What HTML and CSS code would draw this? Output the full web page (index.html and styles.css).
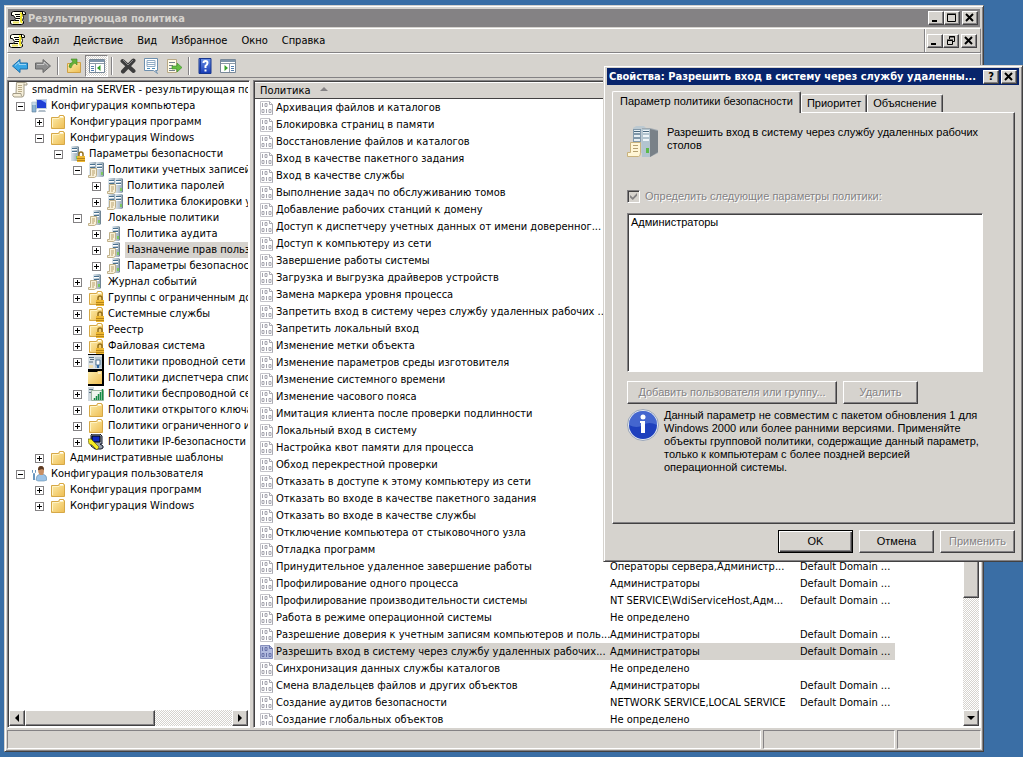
FILE: index.html
```html
<!DOCTYPE html>
<html lang="ru">
<head>
    <meta charset="UTF-8">
    <meta name="viewport" content="width=device-width, initial-scale=1.0">
    <title>Результирующая политика</title>
    <link rel="stylesheet" href="styles.css">
</head>
<body>

    <!-- Icons -->
    <svg class="defs" width="0" height="0">
        <linearGradient id="gFolder" x1="0" y1="0" x2="1" y2="1"><stop offset="0" stop-color="#fdeeae"/><stop offset="1" stop-color="#eebd52"/></linearGradient>
        <linearGradient id="gServer" x1="0" y1="0" x2="1" y2="0"><stop offset="0" stop-color="#dfe8ee"/><stop offset="1" stop-color="#8fa2b0"/></linearGradient>
        <linearGradient id="gBlue" x1="0" y1="0" x2="0" y2="1"><stop offset="0" stop-color="#6d93e8"/><stop offset="1" stop-color="#1539b4"/></linearGradient>
        <symbol id="gpo" viewBox="0 0 16 16">
            <path d="M3.500 1.500h10l2 1v2h-3l1 3-1 3 1 1v2l-2 1h-9l-2-1v-3h4l1-2-2-3H1.500v-3z" fill="#fffff0" stroke="#000"/>
            <path d="M10 3l2 1-1 3v4l1 2" stroke="#f0e424" stroke-width="2" fill="none"/>
            <path d="M3 12.500h6" stroke="#e8e060" stroke-width="2"/>
            <path d="M5 4.500h5M6 6.500h4M6 8.500h4M5 10.500h4M12.500 2v2.500" stroke="#000"/>
        </symbol>
        <symbol id="scroll" viewBox="0 0 16 16">
            <path d="M4.500 .5h9q2 0 1.500 2.500H12v9q0 3-2 3H2q-2-1-1-3.500h3z" fill="#f6efda" stroke="#a39c88"/>
            <path d="M12 3V1.500M9 11.500H1M9 11.500q0 3 1.500 3" stroke="#a39c88" fill="none"/>
            <path d="M6 3.500h4M6 5.500h4M6 7.500h4M6 9.500h4" stroke="#b9ab88"/>
        </symbol>
        <symbol id="folder" viewBox="0 0 16 16">
            <path d="M1.500 3.500h7l1-2h4l1 1.500v11.500h-13z" fill="url(#gFolder)" stroke="#d6a847"/>
            <path d="M10 2.500h3" stroke="#fff"/>
            <path d="M2.500 13V4.500H9l1-1h3.500" stroke="#fff3c5" fill="none"/>
        </symbol>
        <symbol id="lock" viewBox="0 0 16 16">
            <path d="M10 10.500V8q0-2 2-2t2 2v2.500" fill="none" stroke="#95701b" stroke-width="1.500"/>
            <path d="M8 10h8v6H8z" fill="#efb932"/>
            <path d="M8 12.500h8M8 14.500h8" stroke="#b88518"/>
        </symbol>
        <symbol id="folderlock" viewBox="0 0 16 16"><use href="#folder"/><use href="#lock"/></symbol>
        <symbol id="tower" viewBox="0 0 16 16">
            <path d="M0 1l1-1h6l1 1v13l-1 1H0z" fill="url(#gServer)"/>
            <path d="M7.500 1v13" stroke="#708494"/>
            <path d="M1 2.500h5M1 5.500h5" stroke="#48708f"/>
            <path d="M1 3.500h5M1 6.500h5" stroke="#fff"/>
            <path d="M5 10h2v3H5z" fill="#7cc860"/>
        </symbol>
        <symbol id="paper" viewBox="0 0 16 16">
            <path d="M2.500 6.500h6v7q-1 2-2 2H.5v-2h2z" fill="#f8f0d8" stroke="#c0b18a"/>
            <path d="M4 9h3M4 11h3M4 13h2" stroke="#b8a16c"/>
        </symbol>
        <symbol id="serverlock" viewBox="0 0 16 16"><use href="#tower" x="2"/><use href="#lock"/></symbol>
        <symbol id="servers" viewBox="0 0 16 16"><use href="#tower" x="1"/><use href="#tower" x="8"/><use href="#paper"/></symbol>
        <symbol id="server" viewBox="0 0 16 16"><use href="#tower" x="5"/><use href="#paper"/></symbol>
        <symbol id="wired" viewBox="0 0 16 16">
            <path d="M0 0h16v16H0z" fill="#000"/><path d="M0 1h14v14H0z" fill="#dce3e7"/>
            <path d="M1 3.500h5M2 5.500h4M1 8h4" stroke="#526b7d"/>
            <path d="M7 3h7v11H7z" fill="#b5c5cf"/><path d="M8 6h4v5H8z" fill="#fff" stroke="#587a98"/>
            <path d="M10 11v3" stroke="#2c68a6" stroke-width="2"/><path d="M1 11h4v3H1z" fill="#f0ddaa"/>
        </symbol>
        <symbol id="folderdark" viewBox="0 0 16 16"><path d="M0 0h16v16H0z" fill="#000"/><path d="M0 2h9l1-1h4v13H0z" fill="url(#gFolder)"/><path d="M10 3h3" stroke="#fff"/></symbol>
        <symbol id="wireless" viewBox="0 0 16 16">
            <path d="M0 1h6v14H0z" fill="#cfd8de"/><path d="M1 3.500h4M1 6.500h4" stroke="#526b7d"/>
            <path d="M3.500 4.500h12v10h-12z" fill="#eff6ee" stroke="#9bb69e"/>
            <path d="M6.500 14v-2M8.500 14v-4M10.500 14V8M12.500 14V6M14.500 14V3" stroke="#168a46" stroke-width="1.500"/>
        </symbol>
        <symbol id="ipsec" viewBox="0 0 16 16">
            <path d="M3 1l1-1h8l2 2v8h-2l3 2v2l-2 1H7l-4-3z" fill="#98a0ac" stroke="#151a2c"/>
            <path d="M4 2h8v6H4z" fill="#1029c0" stroke="#000"/>
            <path d="M0 5l3 0 3 3 5 5-2 3-5-5-3-1z" fill="#f5ea26" stroke="#575000" stroke-width=".6"/>
        </symbol>
        <symbol id="computer" viewBox="0 0 16 16">
            <path d="M5.500 1.500h10v9h-10z" fill="#1e3ed5" stroke="#c4d0dc"/>
            <path d="M10 2h5v3z" fill="#8fb1ff"/>
            <path d="M8 12h6l1 2H7z" fill="#b2bfca"/>
            <path d="M1 4h4v10H1z" fill="#8eb5d3" stroke="#587994" stroke-width=".6"/>
            <path d="M2 3v4M4 3v4" stroke="#fff"/>
        </symbol>
        <symbol id="user" viewBox="0 0 16 16">
            <path d="M5 14q0-5 4-6h3q4 1 4 6l-3 1H7z" fill="#9cc3e7" stroke="#628dae" stroke-width=".6"/>
            <path d="M7 4q0-4 3-4t3 4-1 5h-3Q7 7 7 4z" fill="#c78e63"/>
            <path d="M7 4q0-4 3-4t3 4l-2-1-3 1z" fill="#5b3b25"/>
            <path d="M1.500 4v2.500l1 1V14M4.500 4v2.500l-1 1V14" stroke="#6a97c0" fill="none"/>
        </symbol>
        <symbol id="policy" viewBox="0 0 14 14">
            <path d="M.5.500h9l3 3v10H.5z" fill="#fff" stroke="#c4c4ca"/>
            <path d="M9.500.5v3h3v10" fill="none" stroke="#a8a8b0"/>
            <path d="M2.500 2v4M5 2.500h2v3H5zM2 8.500h2v3H2zM6.500 8v4M9 8.500h2v3H9z" fill="none" stroke="#a4a4ae"/>
        </symbol>
        <symbol id="policysel" viewBox="0 0 14 14">
            <path d="M.5.500h9l3 3v10H.5z" fill="#b2bbdf" stroke="#8790bd"/>
            <path d="M9.500.5v3h3M2.500 2v4M5 2.500h2v3H5zM2 8.500h2v3H2zM6.500 8v4M9 8.500h2v3H9z" fill="none" stroke="#6872a8"/>
        </symbol>
        <symbol id="arrow" viewBox="0 0 16 16"><path d="M.5 8L8 1.500v3.500h7.500v6H8v3.500z"/><path d="M3 7.500L7 4v2.500h7" fill="none" stroke="#fff" stroke-opacity=".5"/></symbol>
        <symbol id="arrowr" viewBox="0 0 16 16"><path d="M15.500 8L8 1.500v3.500H.5v6H8v3.500z"/><path d="M2 6.500h7V4l4 3.500" fill="none" stroke="#fff" stroke-opacity=".5"/></symbol>
        <symbol id="up" viewBox="0 0 16 16"><path d="M1.500 5.500h5l1-1h7v10h-13z" fill="url(#gFolder)" stroke="#cfa145"/><path d="M3 9q0-4 4-5L5 1h6v6L9 5Q6 6 5 10z" fill="#64b33b" stroke="#3f8620" stroke-width=".6"/></symbol>
        <symbol id="pane" viewBox="0 0 16 16">
            <path d="M.5 1.500h15v13H.5z" fill="#fff" stroke="#798999"/><path d="M1 2h14v2H1z" fill="#7d94aa"/>
            <path d="M1 5.500h14M6.500 6v8" stroke="#8c9aa8"/><path d="M2 8.500h3M2 10.500h3M2 12.500h3" stroke="#537fae"/>
            <path d="M11.500 7v6L8 10z" fill="#35a32b"/>
        </symbol>
        <symbol id="actions" viewBox="0 0 16 16">
            <path d="M.5 1.500h15v13H.5z" fill="#fff" stroke="#798999"/><path d="M1 2h14v2H1z" fill="#7d94aa"/>
            <path d="M1 5.500h14M9.500 6v8" stroke="#8c9aa8"/><path d="M11 8.500h3M11 10.500h3M11 12.500h3" stroke="#537fae"/>
            <path d="M4.500 7v6L8 10z" fill="#35a32b"/>
        </symbol>
        <symbol id="delete" viewBox="0 0 16 16"><path d="M2.500 3l11 10M13.500 2.500L3 13.500" stroke="#3d3d3d" stroke-width="4" stroke-linecap="round"/><path d="M3 2l5 5 5-5" stroke="#8b8b8b" fill="none"/></symbol>
        <symbol id="props" viewBox="0 0 16 16"><path d="M1.500.5h13v12h-2l2 3-4-3h-9z" fill="#fff" stroke="#6d8fae"/><path d="M4 2.500h8v6H4zM4 4.500h8M4 6.500h8" fill="none" stroke="#91acc5"/><path d="M4 10.500h3M9 10.500h3" stroke="#4e91bd"/></symbol>
        <symbol id="export" viewBox="0 0 16 16"><path d="M1.500 1.500h9v13h-9z" fill="#fffbe8" stroke="#b9a985"/><path d="M3 4.500h6M3 7.500h4M3 10.500h4M3 12.500h6" stroke="#74828c"/><path d="M6 8h5V5l5 4.500-5 4.500v-3H6z" fill="#67be43" stroke="#348d25" stroke-width=".6"/></symbol>
        <symbol id="help" viewBox="0 0 16 16"><path d="M2 .5h12v15H2z" fill="url(#gBlue)" stroke="#18378d"/><path d="M3.500 1v14" stroke="#16369c"/><path d="M6.500 5q0-2 2-2t2 2q0 1.500-2 3v2" fill="none" stroke="#fff" stroke-width="2"/><path d="M7.500 11.500h2v2h-2z" fill="#fff"/></symbol>
    </svg>

    <!-- Console window -->
    <main class="window">
        <header class="titlebar">
            <svg class="icon"><use href="#gpo"/></svg>
            <h1>Результирующая политика</h1>
            <div class="winbuttons">
                <button aria-label="Свернуть"><svg viewBox="0 0 10 10"><path d="M1 8h5" stroke-width="2"/></svg></button>
                <button aria-label="Развернуть"><svg viewBox="0 0 10 10"><path d="M.5 1.500h8v7h-8zM0 1h9"/></svg></button>
                <button class="close" aria-label="Закрыть"><svg viewBox="0 0 10 10"><path d="M1 1l7 7M8 1L1 8" stroke-width="2"/></svg></button>
            </div>
        </header>

        <div class="menubar">
            <svg class="icon"><use href="#gpo"/></svg>
            <nav>
                <button>Файл</button>
                <button>Действие</button>
                <button>Вид</button>
                <button>Избранное</button>
                <button>Окно</button>
                <button>Справка</button>
            </nav>
            <div class="winbuttons">
                <button aria-label="Свернуть окно"><svg viewBox="0 0 10 10"><path d="M1 8h5" stroke-width="2"/></svg></button>
                <button aria-label="Восстановить окно"><svg viewBox="0 0 10 10"><path d="M3.500 3V.5h5v5H6M3 1h6M1.500 4.500h5v4h-5zM1 4h6"/></svg></button>
                <button class="close" aria-label="Закрыть окно"><svg viewBox="0 0 10 10"><path d="M1 1l7 7M8 1L1 8" stroke-width="2"/></svg></button>
            </div>
        </div>

        <div class="toolbar">
            <button class="back" aria-label="Назад"><svg class="icon"><use href="#arrow"/></svg></button>
            <button class="forward" aria-label="Вперед"><svg class="icon"><use href="#arrowr"/></svg></button>
            <span class="sep"></span>
            <button aria-label="Вверх"><svg class="icon"><use href="#up"/></svg></button>
            <button class="pressed" aria-label="Дерево консоли"><svg class="icon"><use href="#pane"/></svg></button>
            <span class="sep"></span>
            <button aria-label="Удалить"><svg class="icon"><use href="#delete"/></svg></button>
            <button aria-label="Свойства"><svg class="icon"><use href="#props"/></svg></button>
            <button aria-label="Экспорт"><svg class="icon"><use href="#export"/></svg></button>
            <span class="sep"></span>
            <button aria-label="Справка"><svg class="icon"><use href="#help"/></svg></button>
            <button aria-label="Панель действий"><svg class="icon"><use href="#actions"/></svg></button>
        </div>

        <div class="content">
            <!-- Tree -->
            <section class="treepane">
                <div class="tree">
                    <div class="node root"><svg class="icon"><use href="#scroll"/></svg><span>smadmin на SERVER - результирующая пол</span></div>
                    <ul>
                        <li>
                            <div class="node"><button class="toggle open"></button><svg class="icon"><use href="#computer"/></svg><span>Конфигурация компьютера</span></div>
                            <ul>
                                <li><div class="node"><button class="toggle"></button><svg class="icon"><use href="#folder"/></svg><span>Конфигурация программ</span></div></li>
                                <li>
                                    <div class="node"><button class="toggle open"></button><svg class="icon"><use href="#folder"/></svg><span>Конфигурация Windows</span></div>
                                    <ul>
                                        <li>
                                            <div class="node"><button class="toggle open"></button><svg class="icon"><use href="#serverlock"/></svg><span>Параметры безопасности</span></div>
                                            <ul>
                                                <li>
                                                    <div class="node"><button class="toggle open"></button><svg class="icon"><use href="#servers"/></svg><span>Политики учетных записей</span></div>
                                                    <ul>
                                                        <li><div class="node"><button class="toggle"></button><svg class="icon"><use href="#servers"/></svg><span>Политика паролей</span></div></li>
                                                        <li><div class="node"><button class="toggle"></button><svg class="icon"><use href="#servers"/></svg><span>Политика блокировки у</span></div></li>
                                                    </ul>
                                                </li>
                                                <li>
                                                    <div class="node"><button class="toggle open"></button><svg class="icon"><use href="#server"/></svg><span>Локальные политики</span></div>
                                                    <ul>
                                                        <li><div class="node"><button class="toggle"></button><svg class="icon"><use href="#server"/></svg><span>Политика аудита</span></div></li>
                                                        <li><div class="node selected"><button class="toggle"></button><svg class="icon"><use href="#server"/></svg><span>Назначение прав пользо</span></div></li>
                                                        <li><div class="node"><button class="toggle"></button><svg class="icon"><use href="#server"/></svg><span>Параметры безопасност</span></div></li>
                                                    </ul>
                                                </li>
                                                <li><div class="node"><button class="toggle"></button><svg class="icon"><use href="#server"/></svg><span>Журнал событий</span></div></li>
                                                <li><div class="node"><button class="toggle"></button><svg class="icon"><use href="#folderlock"/></svg><span>Группы с ограниченным дос</span></div></li>
                                                <li><div class="node"><button class="toggle"></button><svg class="icon"><use href="#folderlock"/></svg><span>Системные службы</span></div></li>
                                                <li><div class="node"><button class="toggle"></button><svg class="icon"><use href="#folderlock"/></svg><span>Реестр</span></div></li>
                                                <li><div class="node"><button class="toggle"></button><svg class="icon"><use href="#folderlock"/></svg><span>Файловая система</span></div></li>
                                                <li><div class="node"><button class="toggle"></button><svg class="icon"><use href="#wired"/></svg><span>Политики проводной сети (</span></div></li>
                                                <li><div class="node leaf"><svg class="icon"><use href="#folderdark"/></svg><span>Политики диспетчера списк</span></div></li>
                                                <li><div class="node"><button class="toggle"></button><svg class="icon"><use href="#wireless"/></svg><span>Политики беспроводной сет</span></div></li>
                                                <li><div class="node"><button class="toggle"></button><svg class="icon"><use href="#folder"/></svg><span>Политики открытого ключа</span></div></li>
                                                <li><div class="node"><button class="toggle"></button><svg class="icon"><use href="#folder"/></svg><span>Политики ограниченного ис</span></div></li>
                                                <li><div class="node"><button class="toggle"></button><svg class="icon"><use href="#ipsec"/></svg><span>Политики IP-безопасности н</span></div></li>
                                            </ul>
                                        </li>
                                    </ul>
                                </li>
                                <li><div class="node"><button class="toggle"></button><svg class="icon"><use href="#folder"/></svg><span>Административные шаблоны</span></div></li>
                            </ul>
                        </li>
                        <li>
                            <div class="node"><button class="toggle open"></button><svg class="icon"><use href="#user"/></svg><span>Конфигурация пользователя</span></div>
                            <ul>
                                <li><div class="node"><button class="toggle"></button><svg class="icon"><use href="#folder"/></svg><span>Конфигурация программ</span></div></li>
                                <li><div class="node"><button class="toggle"></button><svg class="icon"><use href="#folder"/></svg><span>Конфигурация Windows</span></div></li>
                            </ul>
                        </li>
                    </ul>
                </div>
                <div class="hscroll">
                    <button aria-label="Влево"><svg viewBox="0 0 8 8"><path d="M6 0v8L2 4z"/></svg></button>
                    <span class="thumb"></span>
                    <span class="track"></span>
                    <button aria-label="Вправо"><svg viewBox="0 0 8 8"><path d="M2 0v8l4-4z"/></svg></button>
                </div>
            </section>

            <!-- Policy list -->
            <section class="listpane">
                <div class="list">
                    <table>
                        <colgroup><col class="c-name"><col class="c-value"><col class="c-source"><col></colgroup>
                        <thead>
                            <tr><th>Политика <svg class="sort" viewBox="0 0 8 4"><path d="M0 4l4-4 4 4z"/></svg></th><th></th><th></th><th></th></tr>
                        </thead>
                        <tbody>
                            <tr><td><div><svg><use href="#policy"/></svg><span>Архивация файлов и каталогов</span></div></td></tr>
                            <tr><td><div><svg><use href="#policy"/></svg><span>Блокировка страниц в памяти</span></div></td></tr>
                            <tr><td><div><svg><use href="#policy"/></svg><span>Восстановление файлов и каталогов</span></div></td></tr>
                            <tr><td><div><svg><use href="#policy"/></svg><span>Вход в качестве пакетного задания</span></div></td></tr>
                            <tr><td><div><svg><use href="#policy"/></svg><span>Вход в качестве службы</span></div></td></tr>
                            <tr><td><div><svg><use href="#policy"/></svg><span>Выполнение задач по обслуживанию томов</span></div></td></tr>
                            <tr><td><div><svg><use href="#policy"/></svg><span>Добавление рабочих станций к домену</span></div></td></tr>
                            <tr><td><div><svg><use href="#policy"/></svg><span>Доступ к диспетчеру учетных данных от имени доверенног...</span></div></td></tr>
                            <tr><td><div><svg><use href="#policy"/></svg><span>Доступ к компьютеру из сети</span></div></td></tr>
                            <tr><td><div><svg><use href="#policy"/></svg><span>Завершение работы системы</span></div></td></tr>
                            <tr><td><div><svg><use href="#policy"/></svg><span>Загрузка и выгрузка драйверов устройств</span></div></td></tr>
                            <tr><td><div><svg><use href="#policy"/></svg><span>Замена маркера уровня процесса</span></div></td></tr>
                            <tr><td><div><svg><use href="#policy"/></svg><span>Запретить вход в систему через службу удаленных рабочих ...</span></div></td></tr>
                            <tr><td><div><svg><use href="#policy"/></svg><span>Запретить локальный вход</span></div></td></tr>
                            <tr><td><div><svg><use href="#policy"/></svg><span>Изменение метки объекта</span></div></td></tr>
                            <tr><td><div><svg><use href="#policy"/></svg><span>Изменение параметров среды изготовителя</span></div></td></tr>
                            <tr><td><div><svg><use href="#policy"/></svg><span>Изменение системного времени</span></div></td></tr>
                            <tr><td><div><svg><use href="#policy"/></svg><span>Изменение часового пояса</span></div></td></tr>
                            <tr><td><div><svg><use href="#policy"/></svg><span>Имитация клиента после проверки подлинности</span></div></td></tr>
                            <tr><td><div><svg><use href="#policy"/></svg><span>Локальный вход в систему</span></div></td></tr>
                            <tr><td><div><svg><use href="#policy"/></svg><span>Настройка квот памяти для процесса</span></div></td></tr>
                            <tr><td><div><svg><use href="#policy"/></svg><span>Обход перекрестной проверки</span></div></td></tr>
                            <tr><td><div><svg><use href="#policy"/></svg><span>Отказать в доступе к этому компьютеру из сети</span></div></td></tr>
                            <tr><td><div><svg><use href="#policy"/></svg><span>Отказать во входе в качестве пакетного задания</span></div></td></tr>
                            <tr><td><div><svg><use href="#policy"/></svg><span>Отказать во входе в качестве службы</span></div></td></tr>
                            <tr><td><div><svg><use href="#policy"/></svg><span>Отключение компьютера от стыковочного узла</span></div></td></tr>
                            <tr><td><div><svg><use href="#policy"/></svg><span>Отладка программ</span></div></td></tr>
                            <tr><td><div><svg><use href="#policy"/></svg><span>Принудительное удаленное завершение работы</span></div></td><td>Операторы сервера,Администр...</td><td>Default Domain ...</td></tr>
                            <tr><td><div><svg><use href="#policy"/></svg><span>Профилирование одного процесса</span></div></td><td>Администраторы</td><td>Default Domain ...</td></tr>
                            <tr><td><div><svg><use href="#policy"/></svg><span>Профилирование производительности системы</span></div></td><td>NT SERVICE\WdiServiceHost,Адм...</td><td>Default Domain ...</td></tr>
                            <tr><td><div><svg><use href="#policy"/></svg><span>Работа в режиме операционной системы</span></div></td><td>Не определено</td><td></td></tr>
                            <tr><td><div><svg><use href="#policy"/></svg><span>Разрешение доверия к учетным записям компьютеров и поль...</span></div></td><td>Администраторы</td><td>Default Domain ...</td></tr>
                            <tr class="selected"><td><div><svg><use href="#policysel"/></svg><span>Разрешить вход в систему через службу удаленных рабочих...</span></div></td><td>Администраторы</td><td>Default Domain ...</td></tr>
                            <tr><td><div><svg><use href="#policy"/></svg><span>Синхронизация данных службы каталогов</span></div></td><td>Не определено</td><td></td></tr>
                            <tr><td><div><svg><use href="#policy"/></svg><span>Смена владельцев файлов и других объектов</span></div></td><td>Администраторы</td><td>Default Domain ...</td></tr>
                            <tr><td><div><svg><use href="#policy"/></svg><span>Создание аудитов безопасности</span></div></td><td>NETWORK SERVICE,LOCAL SERVICE</td><td>Default Domain ...</td></tr>
                            <tr><td><div><svg><use href="#policy"/></svg><span>Создание глобальных объектов</span></div></td><td>Не определено</td><td></td></tr>
                        </tbody>
                    </table>
                </div>
                <div class="vscroll">
                    <button aria-label="Вверх по списку"><svg viewBox="0 0 8 8"><path d="M0 6h8L4 2z"/></svg></button>
                    <span class="thumb"></span>
                    <span class="track"></span>
                    <button aria-label="Вниз по списку"><svg viewBox="0 0 8 8"><path d="M0 2h8L4 6z"/></svg></button>
                </div>
            </section>
        </div>

        <footer class="statusbar"><span></span><span></span><span></span></footer>
    </main>

    <!-- Properties dialog -->
    <section class="dialog" role="dialog">
        <header class="titlebar">
            <h2>Свойства: Разрешить вход в систему через службу удаленны...</h2>
            <div class="winbuttons">
                <button aria-label="Подсказка">?</button>
                <button class="close" aria-label="Закрыть"><svg viewBox="0 0 10 10"><path d="M1 1l7 7M8 1L1 8" stroke-width="2"/></svg></button>
            </div>
        </header>

        <div class="tabs">
            <button class="tab active">Параметр политики безопасности</button>
            <button class="tab">Приоритет</button>
            <button class="tab">Объяснение</button>
        </div>

        <div class="tabpanel">
            <div class="policyname">
                <svg viewBox="0 0 32 32">
                    <path d="M6 2l3-2h8l3 3v24H6z" fill="#bcc9d1"/>
                    <path d="M6 3h8v24H6z" fill="#8198aa"/><path d="M7 4h6v3H7zM7 9h6v2H7zM7 13h6v2H7z" fill="#e6eff4"/>
                    <path d="M15 2h8l8 2v23l-8 4h-8z" fill="#a0aab1"/>
                    <path d="M23 3l8 2v21l-8 5z" fill="#798188"/>
                    <path d="M15 3h8v28h-8z" fill="#b2c4cf"/><path d="M16 4h6v3h-6zM16 9h6v2h-6zM16 13h6v2h-6z" fill="#eef5f8"/>
                    <path d="M16 5.500h6M7 5.500h6" stroke="#48677d"/><path d="M19 22h3v5h-3z" fill="#5cb94b"/>
                    <path d="M3.500 16.500h10v10q0 4-2 4H.5v-4h3z" fill="#fff6d6" stroke="#c9b27c"/>
                    <path d="M6 19.500h5M6 22.500h5M6 25.500h5" stroke="#b5a071"/>
                </svg>
                <p>Разрешить вход в систему через службу удаленных рабочих столов</p>
            </div>

            <label class="define"><input type="checkbox" checked disabled>Определить следующие параметры политики:</label>

            <select class="members" size="2" aria-label="Пользователи и группы">
                <option>Администраторы</option>
            </select>

            <div class="actions">
                <button class="btn add" disabled>Добавить пользователя или группу...</button>
                <button class="btn" disabled>Удалить</button>
            </div>

            <div class="note">
                <svg viewBox="0 0 32 32">
                    <circle cx="16" cy="16" r="15.500" fill="#e4e9f2" stroke="#9ba6b8"/>
                    <circle cx="16" cy="16" r="14" fill="#1e40bd"/>
                    <path d="M2 16a14 14 0 0 1 28 0q-8-4-14 0t-14 0z" fill="#7da0ec" opacity=".4"/>
                    <circle cx="16" cy="8" r="2.500" fill="#fff"/><path d="M13 12h5v12h-4V14h-1z" fill="#fff"/>
                </svg>
                <p>Данный параметр не совместим с пакетом обновления 1 для Windows 2000 или более ранними версиями. Применяйте объекты групповой политики, содержащие данный параметр, только к компьютерам с более поздней версией операционной системы.</p>
            </div>
        </div>

        <div class="dialogbuttons">
            <button class="btn default">OK</button>
            <button class="btn">Отмена</button>
            <button class="btn" disabled>Применить</button>
        </div>
    </section>

</body>
</html>
```

FILE: styles.css
```css
* {
    box-sizing: border-box;
    margin: 0;
    padding: 0;
}
body {
    height: 100vh;
    padding: 5px 39px 5px 4px;
    overflow: hidden;
    background-color: #3a6ea5;
    color: #000;
    font: 11px "DejaVu Sans Condensed", Tahoma, sans-serif;
}
button {
    font: inherit;
    color: inherit;
    background: none;
    border: none;
}
ul {
    list-style: none;
}
svg {
    display: block;
    flex: none;
}
.defs {
    position: absolute;
}
.icon {
    width: 16px;
    height: 16px;
}

/* Window */
.window {
    display: flex;
    flex-direction: column;
    height: 100%;
    padding: 2px;
    background: #d6d3ce;
    border: 1px solid;
    border-color: #d6d3ce #424142 #424142 #d6d3ce;
    box-shadow: inset 1px 1px #fff, inset -1px -1px #848284;
}
.titlebar {
    display: flex;
    align-items: center;
    flex: none;
    height: 18px;
    margin: 1px;
    padding: 0 2px;
    gap: 2px;
    background: #848284;
    color: #d6d3ce;
}
h1, h2 {
    flex: 1;
    font-size: 11px;
    font-weight: bold;
    white-space: nowrap;
    overflow: hidden;
}
.winbuttons {
    display: flex;
}
.winbuttons button {
    display: flex;
    align-items: center;
    justify-content: center;
    width: 16px;
    height: 14px;
    background: #d6d3ce;
    color: #000;
    font-weight: bold;
    border: 1px solid;
    border-color: #fff #424142 #424142 #fff;
    box-shadow: inset -1px -1px #848284;
}
.winbuttons .close {
    margin-left: 2px;
}
.winbuttons svg {
    width: 10px;
    height: 10px;
    fill: none;
    stroke: #000;
}

/* Menu and toolbar */
.menubar {
    display: flex;
    align-items: center;
    flex: none;
    height: 25px;
    padding-left: 1px;
    border: 1px solid;
    border-color: #fff #848284 #848284 #fff;
}
.menubar nav {
    display: flex;
    flex: 1;
}
.menubar nav button {
    padding: 0 7px;
}
.menubar .winbuttons {
    align-items: center;
    align-self: stretch;
    padding: 0 3px 0 2px;
    border-left: 1px solid #848284;
    box-shadow: inset 1px 0 #fff;
}
.toolbar {
    display: flex;
    align-items: center;
    flex: none;
    height: 25px;
    border: 1px solid;
    border-color: #fff #848284 #848284 #fff;
}
.toolbar button {
    display: flex;
    align-items: center;
    justify-content: center;
    width: 23px;
    height: 22px;
}
.toolbar .pressed {
    background: repeating-conic-gradient(#fff 0 25%, #d6d3ce 0 50%) 0 0 / 2px 2px;
    border: 1px solid;
    border-color: #848284 #fff #fff #848284;
}
.toolbar .sep {
    width: 2px;
    height: 18px;
    margin: 0 3px;
    border-left: 1px solid #848284;
    border-right: 1px solid #fff;
}
.back {
    fill: #38a6e6;
    stroke: #1c6eaa;
}
.forward {
    fill: #8d8d8d;
    stroke: #686868;
}

/* Panes */
.content {
    display: flex;
    flex: 1;
    min-height: 0;
    gap: 3px;
    padding-top: 2px;
}
.treepane, .listpane {
    background: #fff;
    border: 1px solid;
    border-color: #848284 #fff #fff #848284;
    box-shadow: inset 1px 1px #424142;
    padding: 1px;
    overflow: hidden;
}
.treepane {
    display: flex;
    flex-direction: column;
    flex: none;
    width: 243px;
}
.tree {
    flex: 1;
    min-height: 0;
    overflow: hidden;
}
.tree ul ul {
    padding-left: 19px;
}
.node {
    display: flex;
    align-items: center;
    height: 16px;
    padding-left: 7px;
    white-space: nowrap;
}
.node.root {
    padding-left: 3px;
}
.node.leaf {
    padding-left: 22px;
}
.node span {
    margin-left: 2px;
    padding: 0 2px;
    line-height: 16px;
}
.node.selected span {
    background: #d6d3ce;
}
.toggle {
    flex: none;
    width: 9px;
    height: 9px;
    margin-right: 6px;
    border: 1px solid #848284;
    background: linear-gradient(#000, #000) center / 5px 1px no-repeat, linear-gradient(#000, #000) center / 1px 5px no-repeat;
}
.toggle.open {
    background: linear-gradient(#000, #000) center / 5px 1px no-repeat;
}
.listpane {
    display: flex;
    flex: 1;
    min-width: 0;
}
.list {
    flex: 1;
    min-width: 0;
    overflow: hidden;
}
table {
    width: 100%;
    table-layout: fixed;
    border-spacing: 0;
}
.c-name {
    width: 350px;
}
.c-value {
    width: 190px;
}
.c-source {
    width: 100px;
}
th {
    height: 17px;
    padding: 0 5px;
    background: #d6d3ce;
    border-top: 1px solid #fff;
    border-bottom: 1px solid #424142;
    font-weight: normal;
    line-height: 15px;
    text-align: left;
}
.sort {
    display: inline-block;
    width: 8px;
    height: 4px;
    margin: 0 0 3px 6px;
    fill: #848284;
}
td {
    height: 17px;
    padding: 0 5px;
    line-height: 17px;
    white-space: nowrap;
}
td:first-child {
    padding-right: 0;
}
td div {
    display: flex;
    align-items: center;
}
td svg {
    width: 14px;
    height: 14px;
}
td div span {
    flex: 1;
    min-width: 0;
    padding-left: 2px;
}
.selected td + td, .selected td div span {
    background: #d6d3ce;
}

/* Scrollbars */
.hscroll, .vscroll {
    display: flex;
    flex: none;
    background: repeating-conic-gradient(#fff 0 25%, #d6d3ce 0 50%) 0 0 / 2px 2px;
}
.hscroll {
    height: 16px;
}
.vscroll {
    flex-direction: column;
    width: 16px;
}
.hscroll button, .vscroll button, .thumb {
    display: flex;
    align-items: center;
    justify-content: center;
    flex: none;
    width: 16px;
    height: 16px;
    background: #d6d3ce;
    border: 1px solid;
    border-color: #fff #424142 #424142 #fff;
    box-shadow: inset -1px -1px #848284;
}
.hscroll svg, .vscroll svg {
    width: 8px;
    height: 8px;
}
.hscroll .thumb {
    width: 130px;
}
.vscroll .thumb {
    height: 500px;
}
.track {
    flex: 1;
}

/* Status bar */
.statusbar {
    display: flex;
    flex: none;
    gap: 2px;
    height: 19px;
    margin-top: 2px;
}
.statusbar span {
    width: 132px;
    border: 1px solid;
    border-color: #848284 #fff #fff #848284;
}
.statusbar span:first-child {
    flex: 1;
}
.statusbar span:last-child {
    width: 84px;
}

/* Dialog */
.dialog {
    position: absolute;
    top: 65px;
    right: 0;
    width: 420px;
    padding: 2px;
    background: #d6d3ce;
    border: 1px solid;
    border-color: #d6d3ce #424142 #424142 #d6d3ce;
    box-shadow: inset 1px 1px #fff, inset -1px -1px #848284;
    font: 11px/13px "Liberation Sans", Arial, sans-serif;
}
.dialog .titlebar {
    height: 17px;
    margin: 0 1px;
    background: #08246b;
    color: #fff;
    font-family: "DejaVu Sans Condensed", Tahoma, sans-serif;
}
.tabs {
    display: flex;
    align-items: flex-end;
    padding: 6px 6px 0;
}
.tab {
    height: 18px;
    padding: 0 5px;
    border: 1px solid;
    border-color: #fff #424142 transparent #fff;
    border-bottom: none;
    border-radius: 2px 2px 0 0;
    box-shadow: inset -1px 0 #848284;
}
.tab.active {
    position: relative;
    height: 22px;
    margin-bottom: -1px;
    padding: 0 7px 2px;
    background: #d6d3ce;
}
.tabpanel {
    margin: 0 5px 0 6px;
    min-height: 412px;
    padding: 13px 31px 0 14px;
    border: 1px solid;
    border-color: #fff #424142 #424142 #fff;
    box-shadow: inset -1px -1px #848284;
}
.policyname, .note {
    display: flex;
    gap: 8px;
}
.policyname svg, .note svg {
    width: 32px;
    height: 32px;
}
.define {
    display: flex;
    align-items: center;
    gap: 5px;
    margin: 32px 0 10px;
    color: #848284;
    text-shadow: 1px 1px #fff;
}
.define input {
    appearance: none;
    width: 13px;
    height: 13px;
    border: 1px solid;
    border-color: #848284 #fff #fff #848284;
    box-shadow: inset 1px 1px #424142;
}
.define input::after {
    content: "";
    display: block;
    width: 7px;
    height: 7px;
    margin: 2px;
    background: #848284;
    clip-path: polygon(0 30%, 40% 65%, 100% 0, 100% 40%, 40% 100%, 0 65%);
}
.members {
    display: block;
    width: 100%;
    height: 159px;
    padding: 1px;
    background: #fff;
    border: 1px solid;
    border-color: #848284 #fff #fff #848284;
    border-radius: 0;
    box-shadow: inset 1px 1px #424142;
    font: inherit;
    color: #000;
    overflow: hidden;
    outline: none;
}
.members option {
    min-height: 13px;
    padding: 1px 2px;
}
.actions {
    display: flex;
    gap: 6px;
    margin: 9px 0 5px;
}
.btn {
    min-width: 75px;
    height: 23px;
    border: 1px solid;
    border-color: #fff #424142 #424142 #fff;
    box-shadow: inset -1px -1px #848284;
}
.btn:disabled {
    color: #848284;
    text-shadow: 1px 1px #fff;
}
.btn.add {
    width: 210px;
}
.btn.default {
    border-color: #000;
    box-shadow: inset 1px 1px #fff, inset -1px -1px #424142, inset -2px -2px #848284;
}
.note {
    gap: 5px;
}
.dialogbuttons {
    display: flex;
    justify-content: flex-end;
    gap: 6px;
    padding: 6px 5px 6px;
}
```
